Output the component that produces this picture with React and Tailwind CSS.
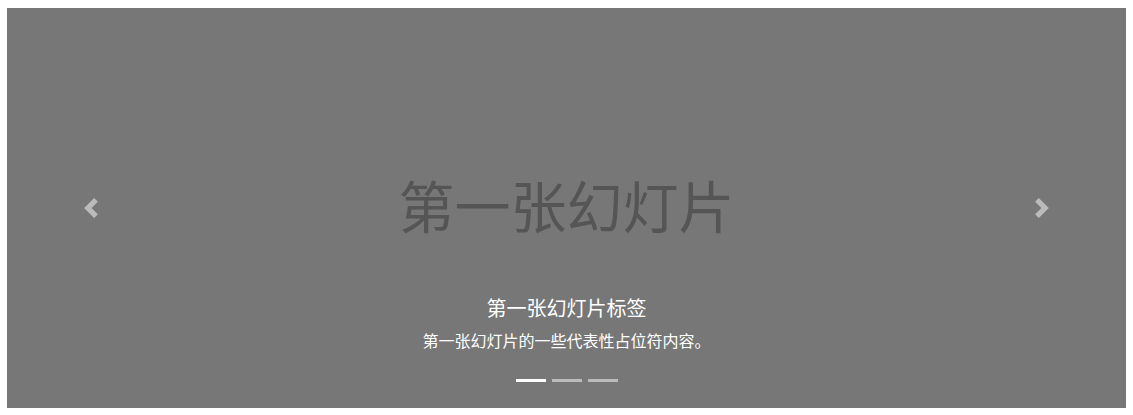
import React, { useState } from 'react';

const slides = [
  { label: '第一张幻灯片', title: '第一张幻灯片标签', text: '第一张幻灯片的一些代表性占位符内容。' },
  { label: '第二张幻灯片', title: '第二张幻灯片标签', text: '第二张幻灯片的一些代表性占位符内容。' },
  { label: '第三张幻灯片', title: '第三张幻灯片标签', text: '第三张幻灯片的一些代表性占位符内容。' },
];

const font = { fontFamily: '"Noto Sans CJK SC", "Noto Sans", sans-serif' };

const Chevron = ({ dir }) => (
  <svg width="20" height="20" viewBox="0 0 8 8" fill="#fff">
    {dir === 'prev' ? (
      <path d="M5.25 0l-4 4 4 4 1.5-1.5L4.25 4l2.5-2.5L5.25 0z" />
    ) : (
      <path d="M2.75 0l-1.5 1.5L3.75 4l-2.5 2.5L2.75 8l4-4-4-4z" />
    )}
  </svg>
);

export default function App() {
  const [active, setActive] = useState(0);
  const slide = slides[active];
  const go = (d) => setActive((active + d + slides.length) % slides.length);

  return (
    <div className="bg-white pt-[8px] px-[7px]" style={font}>
      <div className="relative h-[400px] bg-[#777777] overflow-hidden">
        <div className="h-full flex items-center justify-center">
          <span className="text-[56px] leading-none text-[#555555] mb-[9px]">{slide.label}</span>
        </div>

        <div className="absolute left-[15%] right-[15%] bottom-[20px] py-[20px] text-center text-white">
          <h5 className="text-[20px] leading-[1.2] mb-[8px]">{slide.title}</h5>
          <p className="text-[16px] leading-[1.5] mb-[16px]">{slide.text}</p>
        </div>

        <button
          onClick={() => go(-1)}
          className="absolute top-0 bottom-0 left-0 w-[15%] flex items-center justify-center opacity-50 hover:opacity-90"
        >
          <Chevron dir="prev" />
        </button>
        <button
          onClick={() => go(1)}
          className="absolute top-0 bottom-0 right-0 w-[15%] flex items-center justify-center opacity-50 hover:opacity-90"
        >
          <Chevron dir="next" />
        </button>

        <ol className="absolute left-[15%] right-[15%] bottom-0 mb-[16px] flex justify-center">
          {slides.map((s, i) => (
            <li
              key={i}
              onClick={() => setActive(i)}
              className={`w-[30px] h-[23px] mx-[3px] py-[10px] cursor-pointer ${i === active ? 'opacity-100' : 'opacity-50'}`}
            >
              <div className="h-[3px] bg-white" />
            </li>
          ))}
        </ol>
      </div>
    </div>
  );
}
